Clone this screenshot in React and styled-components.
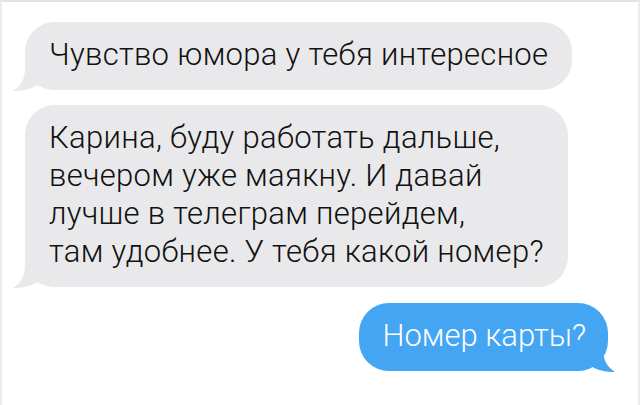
import styled, { createGlobalStyle } from "styled-components";

const Global = createGlobalStyle`
  html, body { margin: 0; padding: 0; background: #fff; }
  body { font-family: "Roboto Light", Roboto, "Noto Sans", sans-serif; }
`;

export const Frame = styled.main`
  box-sizing: border-box;
  width: 640px;
  height: 405px;
  border-top: 2px solid #e2e2e2;
  border-left: 2px solid #ececec;
  border-right: 2px solid #ececec;
  padding: 20px 30px 0 23px;
  display: flex;
  flex-direction: column;
  align-items: flex-start;
  gap: 15px;
  overflow: hidden;
`;

export const Bubble = styled.div`
  position: relative;
  box-sizing: border-box;
  align-self: ${(p) => (p.$mine ? "flex-end" : "flex-start")};
  background: ${(p) => (p.$mine ? "#44a5f3" : "#e9e9eb")};
  color: ${(p) => (p.$mine ? "#fff" : "#111")};
  border-radius: 30px;
  padding: ${(p) => (p.$mine ? "14px 22px 16px 24px" : "14px 24px 16px 24px")};
  font-size: 31px;
  font-weight: 300;
  letter-spacing: ${(p) => (p.$mine ? "0" : "0.3px")};
  line-height: 38px;
  white-space: nowrap;
  margin-top: ${(p) => (p.$mine ? "1px" : "0")};
`;

const TailSvg = styled.svg`
  position: absolute;
  bottom: -2px;
  width: 40px;
  height: 40px;
  ${(p) =>
    p.$mine
      ? "right: -7px; transform: scaleX(-1);"
      : "left: -12px;"}
`;

function Tail({ mine, color }) {
  return (
    <TailSvg $mine={mine} viewBox="0 0 40 40">
      <path
        d="M12,8 L12,16 C12,27 8,34 0,39 C10,39 18,37 24,33 C28,35 32,36.5 38,37 L38,8 Z"
        fill={color}
      />
    </TailSvg>
  );
}

export const Line = styled.div``;

export default function App() {
  return (
    <>
      <Global />
      <Frame>
        <Bubble>
          Чувство юмора у тебя интересное
          <Tail color="#e9e9eb" />
        </Bubble>
        <Bubble>
          <Line>Карина, буду работать дальше,</Line>
          <Line>вечером уже маякну. И давай</Line>
          <Line>лучше в телеграм перейдем,</Line>
          <Line>там удобнее. У тебя какой номер?</Line>
          <Tail color="#e9e9eb" />
        </Bubble>
        <Bubble $mine>
          Номер карты?
          <Tail mine color="#44a5f3" />
        </Bubble>
      </Frame>
    </>
  );
}
